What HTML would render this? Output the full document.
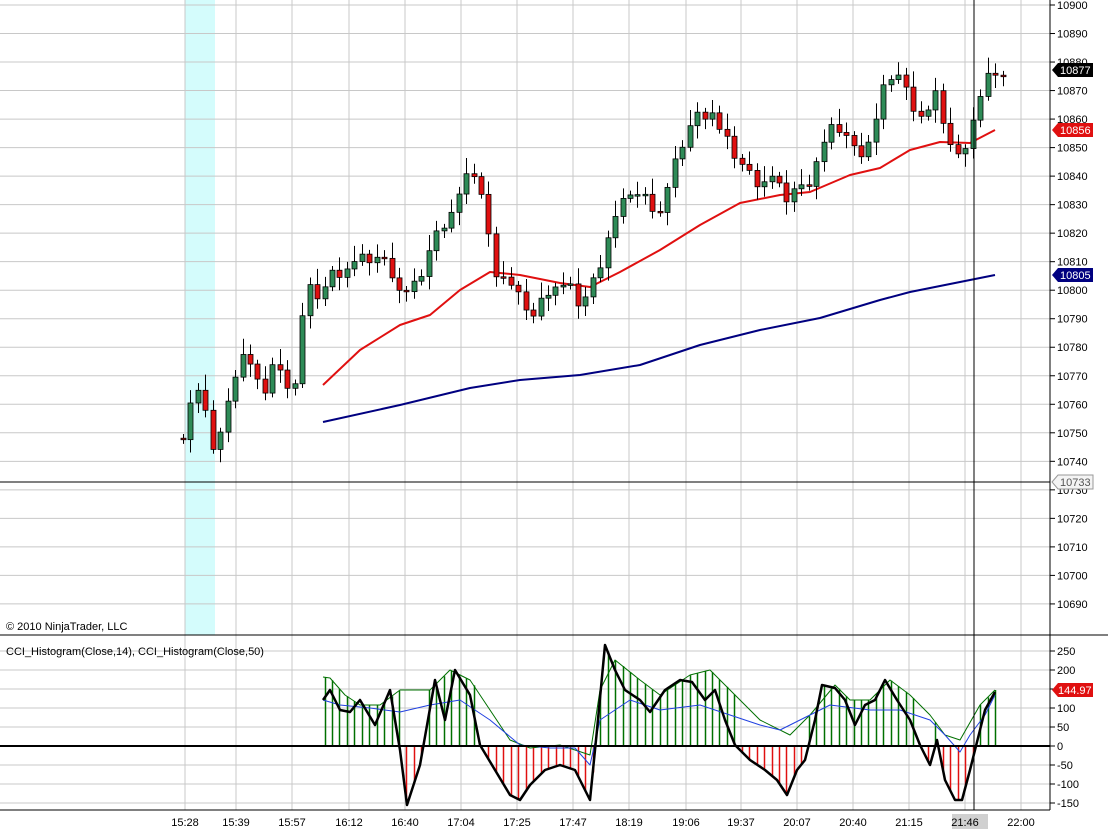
<!DOCTYPE html>
<html><head><meta charset="utf-8"><style>
body{margin:0;background:#fff;width:1108px;height:834px;overflow:hidden;font-family:"Liberation Sans",sans-serif}
svg text{font-family:"Liberation Sans",sans-serif;font-size:11px}
</style></head><body>
<svg id="s" width="1108" height="834" xmlns="http://www.w3.org/2000/svg">
<rect x="185" y="0" width="30" height="635" fill="#d4fcfc"/>
<g id="grid"></g>
<g id="ema"></g>
<g id="candles"></g>
<g id="cci"></g>
<line x1="0" y1="482" x2="1050" y2="482" stroke="#000"/>
<line x1="974" y1="0" x2="974" y2="810" stroke="#000"/>
<line x1="1050" y1="0" x2="1050" y2="810" stroke="#000"/>
<line x1="0" y1="635" x2="1108" y2="635" stroke="#000"/>
<line x1="0" y1="810" x2="1050" y2="810" stroke="#000"/>
<line x1="0" y1="746" x2="1050" y2="746" stroke="#000" stroke-width="2"/>
<text x="6" y="630">© 2010 NinjaTrader, LLC</text>
<text x="6" y="655">CCI_Histogram(Close,14), CCI_Histogram(Close,50)</text>
<g id="axis"></g>
<g id="labels"></g>
</svg>
<script>
const NS="http://www.w3.org/2000/svg";
function el(p,t,a,txt){const e=document.createElementNS(NS,t);for(const k in a)e.setAttribute(k,a[k]);if(txt!==undefined)e.textContent=txt;document.getElementById(p).appendChild(e);return e;}
function interp(pts,x){if(x<=pts[0][0])return pts[0][1];for(let i=1;i<pts.length;i++){if(x<=pts[i][0]){const a=pts[i-1],b=pts[i];return a[1]+(b[1]-a[1])*(x-a[0])/(b[0]-a[0]);}}return pts[pts.length-1][1];}
const Y=p=>5+(10900-p)*2.852;
// grid
const gx=[185,236,292,349,405,461,517,573,629,686,741,797,853,909,965,1021];
const gl=["15:28","15:39","15:57","16:12","16:40","17:04","17:25","17:47","18:19","19:06","19:37","20:07","20:40","21:15","21:46","22:00"];
gx.forEach(x=>el("grid","line",{x1:x,y1:0,x2:x,y2:810,stroke:"#c8c8c8"}));
for(let p=10690;p<=10900;p+=10){const y=Y(p);el("grid","line",{x1:0,y1:y,x2:1050,y2:y,stroke:"#c8c8c8"});
el("axis","line",{x1:1050,y1:y,x2:1055,y2:y,stroke:"#000"});el("axis","text",{x:1057,y:y+4},String(p));}
for(let v=-150;v<=250;v+=50){const y=746-v*0.38;if(v!=0)el("grid","line",{x1:0,y1:y,x2:1050,y2:y,stroke:"#c8c8c8"});
el("axis","line",{x1:1050,y1:y,x2:1055,y2:y,stroke:"#000"});el("axis","text",{x:1057,y:y+4},String(v));}
gx.forEach((x,i)=>{if(i==14){el("axis","rect",{x:952,y:814,width:36,height:15,fill:"#d0d0d0"});}el("axis","text",{x:x,y:826,"text-anchor":"middle"},gl[i]);});
// price
const cp=[[183,10750],[190,10761],[197,10765],[204,10758],[211,10745],[218,10748],[225,10755],[240,10780],[255,10770],[262,10760],[270,10775],[285,10768],[295,10768],[302,10790],[310,10800],[320,10798],[330,10805],[345,10808],[360,10810],[375,10812],[390,10808],[400,10800],[410,10798],[420,10805],[430,10815],[445,10825],[455,10830],[465,10838],[475,10842],[485,10828],[492,10808],[505,10805],[515,10798],[525,10795],[535,10790],[545,10800],[555,10802],[570,10800],[580,10795],[590,10800],[600,10810],[610,10822],[620,10828],[630,10835],[645,10832],[660,10828],[670,10838],[680,10850],[690,10858],[700,10862],[712,10863],[720,10855],[730,10850],[740,10845],[750,10840],[760,10838],[770,10840],[785,10832],[795,10836],[805,10835],[815,10845],[825,10852],[835,10858],[845,10855],[855,10848],[865,10850],[875,10858],[885,10872],[895,10878],[905,10870],[915,10864],[925,10860],[935,10868],[945,10858],[955,10845],[962,10848],[970,10858],[980,10867],[988,10874],[995,10877],[1002,10875]];
let prev=10750,i=0;
for(let x=183;x<=1003;x+=7.45,i++){
 const c=interp(cp,x)+((i*37)%7-3)*0.8;const o=i==0?c+0.5:prev;
 const hi=Math.max(o,c)+1.5+((i*13)%5);const lo=Math.min(o,c)-1.5-((i*7)%4);
 const xx=Math.round(x);
 el("candles","line",{x1:xx+0.5,y1:Y(hi),x2:xx+0.5,y2:Y(lo),stroke:"#000"});
 const t=Y(Math.max(o,c)),b=Y(Math.min(o,c));
 el("candles","rect",{x:xx-2,y:t,width:5,height:Math.max(b-t,1.5),fill:c>=o?"#2e8b57":"#e01010",stroke:"#000","stroke-width":0.8});
 prev=c;}
function poly(g,pts,col,w){el(g,"polyline",{points:pts.map(p=>p.join(",")).join(" "),fill:"none",stroke:col,"stroke-width":w,"stroke-linejoin":"round"});}
poly("ema",[[323,385],[360,350],[400,325],[430,315],[460,290],[490,272],[520,275],[560,283],[590,287],[620,272],[660,250],[700,225],[740,203],[780,195],[810,192],[850,175],[880,168],[910,150],[940,142],[970,143],[995,130]],"#e01010",2);
poly("ema",[[323,422],[400,405],[470,388],[520,380],[580,375],[640,365],[700,345],[760,330],[820,318],[880,300],[910,292],[950,284],[995,275]],"#000080",2);
// CCI
const bk=[[323,700],[330,690],[340,710],[350,712],[360,700],[375,725],[390,690],[400,750],[407,805],[420,765],[435,680],[445,720],[455,670],[470,695],[480,745],[495,770],[510,795],[520,800],[530,785],[545,770],[560,765],[575,770],[590,800],[597,730],[605,645],[615,670],[625,690],[640,700],[650,712],[665,690],[680,680],[692,682],[705,700],[715,690],[725,720],[735,745],[750,760],[765,770],[777,780],[787,795],[797,770],[805,760],[815,720],[822,685],[835,688],[845,700],[855,725],[865,705],[875,700],[885,680],[897,700],[910,720],[920,745],[930,765],[937,740],[945,780],[955,800],[962,800],[970,770],[985,710],[995,692]];
const gr=[[323,677],[330,678],[345,695],[360,705],[380,705],[400,690],[430,690],[450,670],[470,680],[490,710],[510,740],[530,748],[560,745],[590,755],[600,690],[615,660],[640,680],[660,695],[690,675],[710,670],[730,690],[760,720],[790,735],[810,715],[835,685],[850,700],[870,700],[890,680],[910,695],[930,715],[945,735],[960,740],[980,705],[995,690]];
const bl=[[323,700],[340,705],[370,708],[400,712],[430,705],[460,700],[490,720],[520,745],[550,748],[575,748],[590,765],[600,720],[630,700],[660,710],[700,705],[730,715],[760,725],[780,730],[800,720],[830,705],[870,710],[900,710],[930,720],[945,735],[960,752],[970,735],[985,715],[995,695]];
for(let x=183+7.45*19;x<=996;x+=7.45){const xx=Math.round(x)+0.5;const b=interp(bk,x),g=interp(gr,x);
 if(b>746)el("cci","line",{x1:xx,y1:746,x2:xx,y2:b,stroke:"#e01010","stroke-width":1.5});
 else el("cci","line",{x1:xx,y1:746,x2:xx,y2:Math.min(g,b),stroke:"#007000","stroke-width":1.5});}
poly("cci",gr,"#007000",1);poly("cci",bl,"#2040e0",1);poly("cci",bk,"#000",2.5);
// labels
function tag(y,txt,bg,fg){el("labels","polygon",{points:`1052,${y} 1058,${y-7} 1093,${y-7} 1093,${y+7} 1058,${y+7}`,fill:bg,stroke:bg=="#f4f4f4"?"#999":"none"});el("labels","text",{x:1060,y:y+4,fill:fg},txt);}
tag(70,"10877","#000","#fff");tag(130,"10856","#e01010","#fff");tag(275,"10805","#000080","#fff");tag(482,"10733","#f4f4f4","#555");
el("labels","polygon",{points:"1052,690 1058,683 1093,683 1093,697 1058,697",fill:"#e01010"});el("labels","text",{x:1058,y:694,fill:"#fff"},"144.97");
</script>
</body></html>
